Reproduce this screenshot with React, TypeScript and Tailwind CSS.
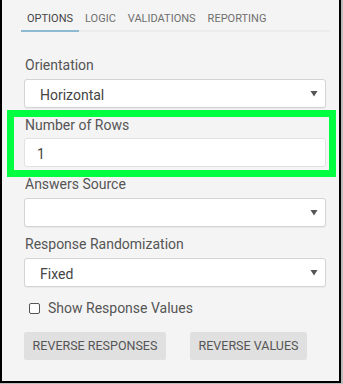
import React from "react";

const font = { fontFamily: "Roboto, 'Liberation Sans', sans-serif" };

const tabs = ["OPTIONS", "LOGIC", "VALIDATIONS", "REPORTING"];

const Arrow = () => (
  <svg width="8" height="7" viewBox="0 0 8 7" className="shrink-0">
    <path d="M0.5 1 L7.5 1 L4 6.5 Z" fill="#555" />
  </svg>
);

const SelectField: React.FC<{ label: string; value?: string }> = ({ label, value }) => (
  <div className="mb-[8px]">
    <div className="h-[18px] leading-[18px] text-[14px] text-[#555] mb-[5px] pl-[1px]">{label}</div>
    <div className="h-[29px] bg-white border border-[#d4d4d4] rounded-[3px] flex items-center justify-between pl-[15px] pr-[7px] shadow-[0_1px_1px_rgba(0,0,0,0.05)]">
      <span className="text-[14px] text-[#444] pt-[3px]">{value}</span>
      <Arrow />
    </div>
  </div>
);

export default function App() {
  return (
    <div className="w-[343px] h-[384px] bg-[#bcbcbc]" style={font}>
      <div className="relative w-[341px] h-[383px] bg-[#f4f4f4] border-l-2 border-r-2 border-b-2 border-black">
        {/* tabs */}
        <div className="ml-[19px] mr-[9px] pt-[11px] flex border-b-2 border-[#ececec]">
          {tabs.map((t, i) => (
            <div
              key={t}
              className={
                "px-[6px] pb-[3px] -mb-[2px] text-[11px] leading-[16px] " +
                (i === 0 ? "text-[#444] border-b-2 border-[#8cbad0]" : "text-[#6f6f6f] border-b-2 border-transparent")
              }
            >
              {t}
            </div>
          ))}
        </div>

        {/* fields */}
        <div className="ml-[22px] mr-[13px] mt-[24px]">
          <SelectField label="Orientation" value="Horizontal" />
          <div className="mb-[8px]">
            <div className="h-[18px] leading-[18px] text-[14px] text-[#555] mb-[4px] pl-[1px]">Number of Rows</div>
            <div className="h-[29px] bg-white border border-[#e2e2e2] rounded-[3px] flex items-center pl-[12px]">
              <span className="text-[14px] text-[#444] pt-[3px]">1</span>
            </div>
          </div>
          <SelectField label="Answers Source" value="" />
          <SelectField label="Response Randomization" value="Fixed" />

          <div className="flex items-center mt-[12px] ml-[5px]">
            <div className="w-[11px] h-[11px] border border-[#555] rounded-[2px] bg-white" />
            <span className="ml-[8px] text-[14px] text-[#555] leading-[18px]">Show Response Values</span>
          </div>

          <div className="flex gap-[24px] mt-[15px]">
            <div className="w-[142px] h-[28px] bg-[#e0e0e0] rounded-[2px] flex items-center justify-center text-[12.5px] text-[#555]">
              REVERSE RESPONSES
            </div>
            <div className="w-[117px] h-[28px] bg-[#e0e0e0] rounded-[2px] flex items-center justify-center text-[12.5px] text-[#555]">
              REVERSE VALUES
            </div>
          </div>
        </div>

        {/* highlight annotation */}
        <div className="absolute left-[5px] top-[110px] w-[329px] h-[67px] border-[7px] border-[#00ff40] pointer-events-none" />
      </div>
    </div>
  );
}
